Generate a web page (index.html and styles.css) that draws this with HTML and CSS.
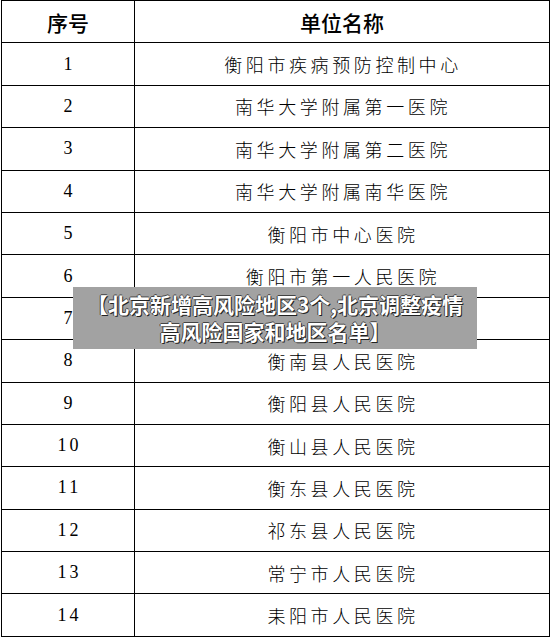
FILE: index.html
```html
<!DOCTYPE html>
<html lang="zh-CN">
<head>
<meta charset="utf-8">
<title>单位名称</title>
<link rel="stylesheet" href="styles.css">
</head>
<body>
<div class="page">
  <div class="grid">
    <div class="cell head">序号</div>
    <div class="cell head">单位名称</div>
    <div class="cell num">1</div><div class="cell name">衡阳市疾病预防控制中心</div>
    <div class="cell num">2</div><div class="cell name">南华大学附属第一医院</div>
    <div class="cell num">3</div><div class="cell name">南华大学附属第二医院</div>
    <div class="cell num">4</div><div class="cell name">南华大学附属南华医院</div>
    <div class="cell num">5</div><div class="cell name">衡阳市中心医院</div>
    <div class="cell num">6</div><div class="cell name">衡阳市第一人民医院</div>
    <div class="cell num">7</div><div class="cell name">衡阳市第二人民医院</div>
    <div class="cell num">8</div><div class="cell name">衡南县人民医院</div>
    <div class="cell num">9</div><div class="cell name">衡阳县人民医院</div>
    <div class="cell num">10</div><div class="cell name">衡山县人民医院</div>
    <div class="cell num">11</div><div class="cell name">衡东县人民医院</div>
    <div class="cell num">12</div><div class="cell name">祁东县人民医院</div>
    <div class="cell num">13</div><div class="cell name">常宁市人民医院</div>
    <div class="cell num">14</div><div class="cell name">耒阳市人民医院</div>
  </div>
  <div class="overlay">
    <div class="overlay-text">【北京新增高风险地区3个,北京调整疫情<br>高风险国家和地区名单】</div>
  </div>
</div>
</body>
</html>
```

FILE: styles.css
```css
html, body {
  margin: 0;
  padding: 0;
  background: #fff;
}
.page {
  position: relative;
  width: 551px;
  height: 638px;
  overflow: hidden;
}
.grid {
  margin-left: 1px;
  width: 549px;
  box-sizing: border-box;
  display: grid;
  grid-template-columns: 133px 1fr;
  grid-auto-rows: 42.4px;
  border-top: 1px solid #000;
  border-left: 1px solid #000;
}
.cell {
  border-right: 1px solid #000;
  border-bottom: 1px solid #000;
  display: flex;
  align-items: center;
  justify-content: center;
  color: #000;
}
.head {
  font-family: "Noto Sans CJK SC", sans-serif;
  font-size: 21px;
  font-weight: 500;
}
.num {
  font-family: "Liberation Serif", serif;
  font-size: 18px;
  letter-spacing: 3px;
  padding-left: 3px;
}
.name {
  font-family: "Noto Sans CJK SC", sans-serif;
  font-size: 18px;
  font-weight: 300;
  letter-spacing: 3.6px;
  padding-left: 2px;
}
.overlay {
  position: absolute;
  left: 73px;
  top: 287px;
  width: 404px;
  height: 62px;
  background: #a2a2a2;
  display: flex;
  align-items: center;
  justify-content: center;
}
.overlay-text {
  font-family: "Noto Sans CJK SC", sans-serif;
  font-size: 21px;
  font-weight: 700;
  line-height: 27px;
  color: #fff;
  text-align: center;
  text-shadow: 1px 1px 0 #222, -1px 0 0 #444, 0 -1px 0 #444;
}
```
